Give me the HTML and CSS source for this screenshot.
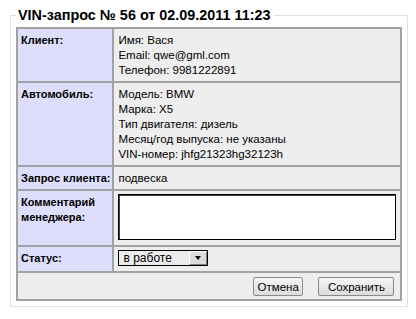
FILE: index.html
```html
<!DOCTYPE html>
<html lang="ru">
<head>
  <meta charset="UTF-8">
  <title>VIN-запрос № 56</title>
  <link rel="stylesheet" href="styles.css">
</head>
<body>
  <fieldset class="request">
    <legend>VIN-запрос № 56 от 02.09.2011 11:23</legend>
    <table class="details">
      <tr>
        <th>Клиент:</th>
        <td>Имя: Вася<br>Email: qwe@gml.com<br>Телефон: 9981222891</td>
      </tr>
      <tr>
        <th>Автомобиль:</th>
        <td>Модель: BMW<br>Марка: X5<br>Тип двигателя: дизель<br>Месяц/год выпуска: не указаны<br>VIN-номер: jhfg21323hg32123h</td>
      </tr>
      <tr>
        <th>Запрос клиента:</th>
        <td>подвеска</td>
      </tr>
      <tr>
        <th>Комментарий<br>менеджера:</th>
        <td><textarea class="comment"></textarea></td>
      </tr>
      <tr>
        <th>Статус:</th>
        <td>
          <div class="status">
            <select>
              <option>в работе</option>
              <option>выполнен</option>
            </select>
            <span class="status-arrow"></span>
          </div>
        </td>
      </tr>
      <tr>
        <td colspan="2" class="actions">
          <button class="btn-cancel">Отмена</button>
          <button class="btn-save">Сохранить</button>
        </td>
      </tr>
    </table>
  </fieldset>
</body>
</html>
```

FILE: styles.css
```css
body {
  margin: 0;
  padding: 7px 0 0 10px;
  font-family: "Liberation Sans", Arial, sans-serif;
  font-size: 11px;
  color: #000;
  background: #fff;
}
.request {
  box-sizing: border-box;
  width: 395px;
  margin: 0;
  padding: 4px 5px 5px 5px;
  border: 1px solid #e2e2e2;
}
.request legend {
  padding: 0 3px 0 2px;
  margin-left: 0;
  font-size: 14.4px;
  font-weight: bold;
  line-height: 16px;
}
.details {
  width: 100%;
  border-collapse: collapse;
}
.details th,
.details td {
  border: 2px solid #a2a2a2;
  padding: 4px 4px 3px 4px;
  line-height: 15px;
  vertical-align: top;
  text-align: left;
}
.details th {
  width: 89px;
  padding-left: 3px;
  padding-right: 2px;
  white-space: nowrap;
  background: #dedefc;
}
.details td {
  font-size: 11.5px;
  background: #eeeeee;
}
.comment {
  display: block;
  box-sizing: border-box;
  width: 278px;
  height: 46px;
  margin: -1px 0 2px 0;
  border: 1px solid #000;
  box-shadow: inset 1px 1px 0 #444;
  background: #fff;
  resize: none;
}
.status {
  position: relative;
  width: 90px;
  height: 16px;
  margin: -1px 0 2px 0;
}
.status select {
  box-sizing: border-box;
  width: 90px;
  height: 16px;
  margin: 0;
  padding: 0 0 0 4px;
  border: 1px solid #000;
  border-radius: 0;
  background: #ececec;
  font-family: "Liberation Sans", Arial, sans-serif;
  font-size: 12px;
  line-height: 14px;
  appearance: none;
  -webkit-appearance: none;
}
.status-arrow {
  position: absolute;
  top: 1px;
  right: 1px;
  width: 18px;
  height: 14px;
  box-sizing: border-box;
  background: #dcdcdc;
  border-top: 1px solid #fff;
  border-left: 1px solid #fff;
  border-right: 1px solid #808080;
  border-bottom: 1px solid #808080;
  pointer-events: none;
}
.status-arrow::after {
  content: "";
  position: absolute;
  left: 5px;
  top: 4px;
  border-left: 3px solid transparent;
  border-right: 3px solid transparent;
  border-top: 4px solid #000;
}
.details .actions {
  padding: 4px 6px 3px 4px;
  text-align: right;
}
.actions button {
  box-sizing: border-box;
  height: 19px;
  margin-left: 12px;
  padding: 0;
  border: 1px solid #8a8a8a;
  border-radius: 2px;
  background: linear-gradient(#f6f6f6, #dcdcdc);
  font-family: "Liberation Sans", Arial, sans-serif;
  font-size: 11.5px;
  color: #000;
  vertical-align: top;
  cursor: pointer;
}
.actions .btn-cancel {
  width: 50px;
}
.actions .btn-save {
  width: 76px;
}
.actions button:hover {
  background: linear-gradient(#ffffff, #e6e6e6);
}
```
